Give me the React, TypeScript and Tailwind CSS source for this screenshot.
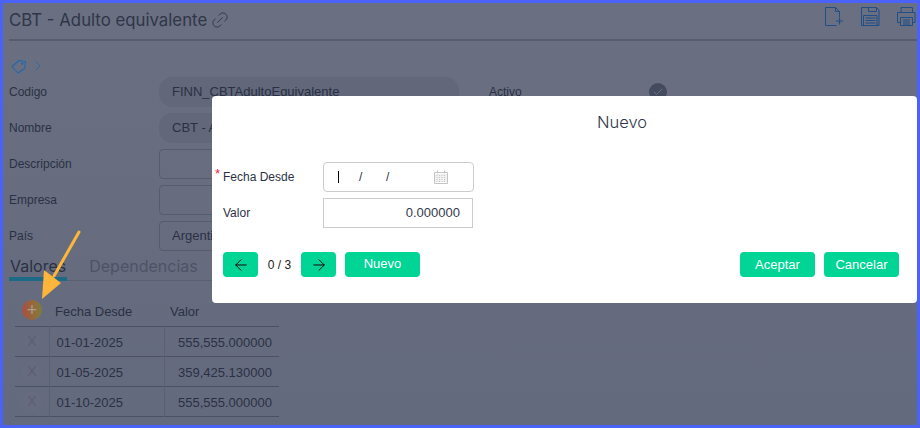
import { ArrowLeft, ArrowRight, Check, ChevronRight, Link2 } from "lucide-react";

const LIBERATION = "font-['Liberation_Sans',Arial,sans-serif]";

const FIELDS = [
  { label: "Codigo", value: "FINN_CBTAdultoEquivalente", filled: true },
  { label: "Nombre", value: "CBT - Adulto equivalente", filled: true },
  { label: "Descripción", value: "", filled: false },
  { label: "Empresa", value: "", filled: false },
  { label: "País", value: "Argentina", filled: false },
];

const ROWS = [
  { date: "01-01-2025", value: "555,555.000000" },
  { date: "01-05-2025", value: "359,425.130000" },
  { date: "01-10-2025", value: "555,555.000000" },
];

function FileAddIcon() {
  return (
    <svg width="20" height="20" viewBox="0 0 20 20" fill="none" stroke="#1f4f86" strokeWidth="1">
      <path d="M14.500 10V4.500L10.500 .5H.5v18h11" />
      <path d="M10.500 .5V4.500h4" />
      <path d="M11 14h7M14.500 10.500v7" strokeWidth="1.200" />
    </svg>
  );
}

function SaveIcon() {
  return (
    <svg width="20" height="20" viewBox="0 0 20 20" fill="none" stroke="#1f4f86" strokeWidth="1">
      <path d="M.5.5h15l2.500 2.500v15.500H.5z" />
      <path d="M7.500.5v4h8v-4" />
      <path d="M2.500 18.500V8.500h13.500v10" />
      <path d="M4.500 11h10M4.500 13.500h10M4.500 16h10" />
    </svg>
  );
}

function PrintIcon() {
  return (
    <svg width="20" height="20" viewBox="0 0 20 20" fill="none" stroke="#1f4f86" strokeWidth="1">
      <path d="M4 5.500V.5h11.500v5" />
      <path d="M3.500 15.500H.5v-10h17.500v10h-2.500" />
      <path d="M3.500 10.500h12v8h-12z" />
      <path d="M6 13h7M6 15h7M6 17h7" />
    </svg>
  );
}

function TagIcon() {
  return (
    <svg width="16" height="15" viewBox="0 0 16 15" fill="none" stroke="#2368ad" strokeWidth="1.100">
      <path d="M1 7.500 8 1.500l6.500 1-.8 7L7 14z" strokeLinejoin="round" />
      <circle cx="11.300" cy="4.500" r="0.700" />
    </svg>
  );
}

function CalendarIcon() {
  return (
    <svg width="14" height="14" viewBox="0 0 14 14" fill="none" stroke="#c4c4c4" strokeWidth="1">
      <path d="M.5 2.500h13v11H.5z" />
      <path d="M3.500 .5v3M10.500 .5v3" />
      <path d="M.5 5h13M.5 7h13M.5 9h13M.5 11h13" strokeDasharray="1 1" />
      <path d="M3 5v8M5.500 5v8M8 5v8M10.500 5v8" strokeDasharray="1 1" />
    </svg>
  );
}

function PageBehind() {
  return (
    <div className="flex h-full flex-col bg-gradient-to-b from-[#6a6f81] to-[#646a7d] pl-[6px] text-[#2a3144]">
      <div className="flex h-[38px] items-start justify-between border-b-2 border-[#585c6e]">
        <div className="flex items-center gap-[3px] pt-[3px] font-['Inter',sans-serif] text-[16.800px] leading-[28px] text-[#2f3649]">
          CBT - Adulto equivalente
          <Link2 size={20} strokeWidth={1} className="-rotate-45 text-[#2f3649]" />
        </div>
        <div className="flex gap-[16px] pt-[4px]">
          <FileAddIcon />
          <SaveIcon />
          <PrintIcon />
        </div>
      </div>

      <div className="flex h-[33px] items-end gap-[3px] pl-[2px] text-[#2368ad]">
        <TagIcon />
        <ChevronRight size={16} strokeWidth={1.2} />
      </div>

      <div className={`flex flex-col gap-[6px] pt-[3px] text-[12px] ${LIBERATION}`}>
        {FIELDS.map((field, index) => (
          <div key={field.label} className="flex h-[30px] items-start">
            <span className="w-[150px] pt-[6px]">{field.label}</span>
            <div
              className={
                field.filled
                  ? "h-[30px] w-[300px] rounded-[14px] bg-[#62677a] px-[13px] pt-[7px] text-[13px] leading-[16px]"
                  : "h-[30px] w-[300px] rounded-[4px] border border-[#565b6d] px-[12px] pt-[6px] text-[13px] leading-[16px]"
              }
            >
              {field.value}
            </div>
            {index === 0 && (
              <div className="flex items-center pl-[30px] pt-[6px]">
                <span className="w-[160px]">Activo</span>
                <span className="flex size-[18px] items-center justify-center rounded-full bg-[#454b5e]">
                  <Check size={12} className="text-[#6a6f81]" />
                </span>
              </div>
            )}
          </div>
        ))}
      </div>

      <div className="mt-[6px] flex h-[24px] w-[270px] items-start gap-[22px] border-b border-[#5a5f71] font-['Inter',sans-serif] text-[16px] leading-[18px]">
        <span className="h-[24px] border-b-[4px] border-[#1c6a85] px-[1px]">Valores</span>
        <span className="text-[#4d5366]">Dependencias</span>
      </div>

      <table className={`ml-[6px] mt-[15px] w-[264px] border-collapse text-[13px] ${LIBERATION}`}>
        <thead>
          <tr className="h-[30px] border-b border-[#4b5063] text-left">
            <th className="w-[34px] p-0" />
            <th className="w-[115px] p-0 pl-[6px] pt-[1px] font-normal">Fecha Desde</th>
            <th className="p-0 pl-[6px] pt-[1px] font-normal">Valor</th>
          </tr>
        </thead>
        <tbody>
          {ROWS.map((row) => (
            <tr key={row.date} className="h-[30px] border-b border-[#4b5063]">
              <td className="border-r border-[#5a5f71] p-0 pl-[7px] text-[#5b6073]">
                <span className="flex size-[20px] items-center justify-center rounded-full bg-[#666b7e] text-[14px]">X</span>
              </td>
              <td className="border-r border-[#5a5f71] p-0 pl-[7px] pt-[3px]">{row.date}</td>
              <td className="p-0 pr-[7px] pt-[3px] text-right">{row.value}</td>
            </tr>
          ))}
        </tbody>
      </table>
    </div>
  );
}

function Modal() {
  return (
    <div className={`absolute left-[209px] top-[93px] flex h-[207px] w-[705px] flex-col rounded-[4px] bg-white text-[#2b3245] ${LIBERATION}`}>
      <h2 className="h-[66px] pl-[385px] pt-[16px] font-['Inter',sans-serif] text-[16.500px] font-light leading-[20px] text-[#2f364a]">
        Nuevo
      </h2>

      <div className="flex flex-col gap-[6px] pl-[11px] text-[12px]">
        <div className="flex items-center">
          <span className="relative w-[100px]">
            <span className="absolute -left-[8px] -top-[4px] text-[13px] text-[#f0204e]">*</span>
            Fecha Desde
          </span>
          <div className="flex h-[30px] w-[151px] items-center rounded-[4px] border border-[#cccccc] pl-[14px] pr-[25px] text-[12px]">
            <span className="mr-[20px] h-[12px] w-px bg-black" />
            <span className="w-[27px]">/</span>
            <span className="flex-1">/</span>
            <CalendarIcon />
          </div>
        </div>
        <div className="flex items-center">
          <span className="w-[100px]">Valor</span>
          <div className="flex h-[30px] w-[150px] items-center justify-end border border-[#cccccc] pr-[12px] text-[13px] text-[#333a4d]">
            0.000000
          </div>
        </div>
      </div>

      <div className="flex items-center justify-between pl-[11px] pr-[18px] pt-[24px]">
        <div className="flex items-center text-[12px] text-[#222222]">
          <button className="flex h-[25px] w-[35px] items-center justify-center rounded-[4px] bg-[#00d596] text-black">
            <ArrowLeft size={18} strokeWidth={1.300} />
          </button>
          <span className="w-[43px] text-center">0 / 3</span>
          <button className="flex h-[25px] w-[35px] items-center justify-center rounded-[4px] bg-[#00d596] text-black">
            <ArrowRight size={18} strokeWidth={1.300} />
          </button>
          <button className="ml-[9px] h-[25px] w-[75px] rounded-[4px] bg-[#00d596] pb-[2px] text-[13px] text-white">Nuevo</button>
        </div>
        <div className="flex gap-[9px] text-[13px] text-white">
          <button className="h-[25px] w-[75px] rounded-[4px] bg-[#00d596]">Aceptar</button>
          <button className="h-[25px] w-[75px] rounded-[4px] bg-[#00d596]">Cancelar</button>
        </div>
      </div>
    </div>
  );
}

function CalloutArrow() {
  return (
    <svg className="absolute left-[37px] top-[227px]" width="46" height="72" viewBox="0 0 46 72" fill="none">
      <path d="M39 2 L14 46" stroke="#fdb63a" strokeWidth="3" strokeLinecap="round" />
      <path d="M2 69 L4 40 L21 53 Z" fill="#fdb63a" />
    </svg>
  );
}

function AddButton() {
  return (
    <span className="absolute left-[19px] top-[297px] flex size-[20px] items-center justify-center rounded-full bg-gradient-to-r from-[#a94e3e] to-[#7f7b3c] font-['Liberation_Sans',sans-serif] text-[18px] leading-none text-[#a89f8c]">
      +
    </span>
  );
}

export default function App() {
  return (
    <div className="h-[428px] w-[920px] overflow-hidden border-[3px] border-[#4a62f8]">
      <div className="relative h-full w-full">
        <PageBehind />
        <Modal />
        <AddButton />
        <CalloutArrow />
      </div>
    </div>
  );
}
